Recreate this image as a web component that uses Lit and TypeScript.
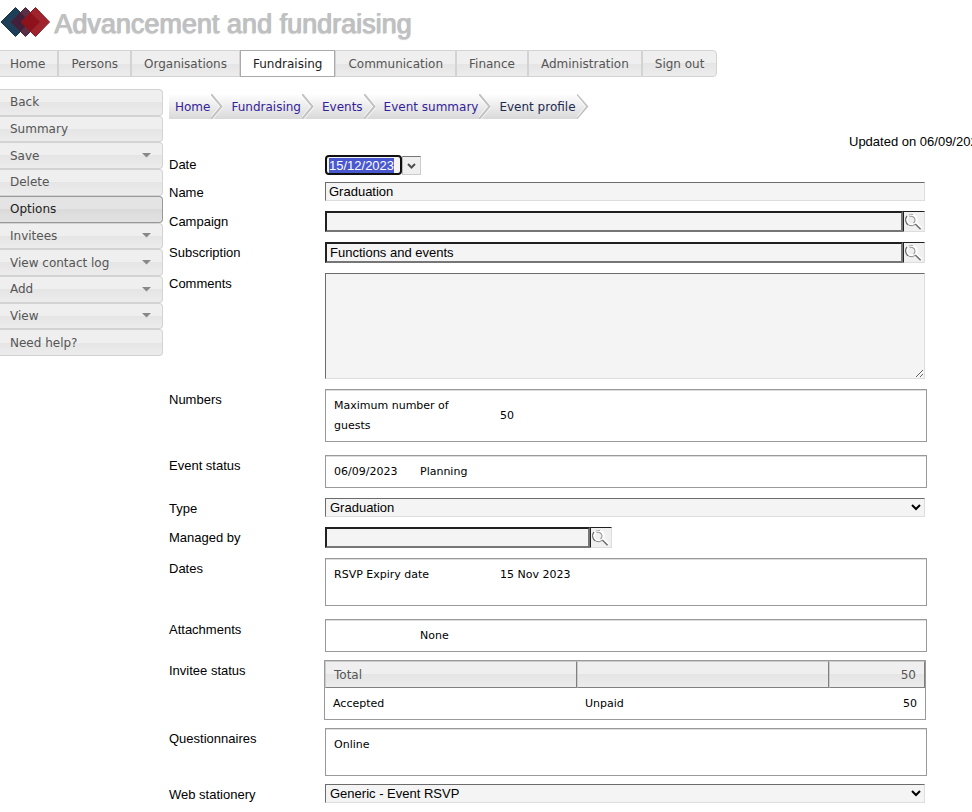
import { LitElement, html, css, svg } from "lit";
import { customElement, property } from "lit/decorators.js";
import { classMap } from "lit/directives/class-map.js";

const NAV = ["Home", "Persons", "Organisations", "Fundraising", "Communication", "Finance", "Administration", "Sign out"];
const CRUMBS = ["Home", "Fundraising", "Events", "Event summary", "Event profile"];
const ACTIONS: { label: string; more?: boolean; active?: boolean }[] = [
  { label: "Back" },
  { label: "Summary" },
  { label: "Save", more: true },
  { label: "Delete" },
  { label: "Options", active: true },
  { label: "Invitees", more: true },
  { label: "View contact log", more: true },
  { label: "Add", more: true },
  { label: "View", more: true },
  { label: "Need help?" },
];

@customElement("lookup-field")
export class LookupField extends LitElement {
  @property() value = "";
  @property() label = "";

  static styles = css`
    :host {
      display: flex;
      height: 21px;
    }
    .text {
      box-sizing: border-box;
      flex: 1;
      min-width: 0;
      margin: 0;
      padding: 0 3px;
      border: 2px solid;
      border-color: #202020 #767676 #767676 #202020;
      border-radius: 0;
      background: #f4f4f4;
      color: #000;
      font: 13px "Liberation Sans", Arial, sans-serif;
    }
    .find {
      box-sizing: border-box;
      width: 22px;
      margin: 0;
      padding: 0;
      border: 1px solid;
      border-color: #202020 #ddd #ddd #202020;
      background: #f0f0f0;
    }
    .find svg {
      display: block;
    }
  `;

  render() {
    return html`
      <input class="text" type="text" aria-label=${this.label} .value=${this.value} />
      <button class="find" type="button" aria-label="Find ${this.label}">
        <svg width="20" height="19" viewBox="0 0 20 19" fill="none">
          <circle cx="7.500" cy="8" r="5" stroke="#fff" stroke-width="2.400" />
          <path d="M4.500 13A6 6 0 0 1 3 4" stroke="#666" stroke-width="1.200" />
          <path d="M4.500 3.200A5.800 5.800 0 0 1 9 2.500" stroke="#aaa" />
          <path d="M5.500 4.600A4 4 0 0 1 11 7.500A4 4 0 0 1 9.500 11" stroke="#999" stroke-width="1.100" />
          <path d="M5 13.300A6 6 0 0 0 11 12.500" stroke="#888" />
          <path d="M12.500 11.300L17.500 16" stroke="#fff" stroke-width="2" />
          <path d="M11.300 12L16.600 17.300" stroke="#6c6c6c" stroke-width="1.500" />
        </svg>
      </button>
    `;
  }
}

@customElement("app-root")
export class AppRoot extends LitElement {
  static styles = css`
    :host {
      display: block;
      overflow: hidden;
      background: #fff;
      color: #000;
      font: 13px/16px "Liberation Sans", Arial, sans-serif;
    }
    .header {
      display: flex;
      align-items: center;
      gap: 4px;
      height: 50px;
    }
    .logo {
      display: block;
      width: 50px;
      height: 44px;
    }
    .title {
      margin: 0;
      padding-bottom: 2px;
      color: #c0c0c0;
      font-size: 27px;
      font-weight: 400;
      line-height: 48px;
      text-shadow: 1px 0 0 #c0c0c0, 0 1px 1px #ccc;
      white-space: nowrap;
    }
    .nav {
      display: flex;
      font: 12px/24px "DejaVu Sans", Verdana, sans-serif;
    }
    .tab {
      padding: 1px 12px 0;
      border: 1px solid #d3d3d3;
      background: linear-gradient(#efefef 0 50%, #e5e5e5 50%, #ececec);
      color: #555;
      text-decoration: none;
      white-space: nowrap;
    }
    .tab:first-child {
      padding-left: 10px;
      border-left: 0;
    }
    .tab:last-child {
      border-radius: 0 4px 4px 0;
    }
    .tab.active {
      border-color: #aaa;
      background: #fff;
      color: #212121;
    }
    .body {
      display: flex;
      align-items: flex-start;
      gap: 6px;
      padding-top: 12px;
    }
    .side {
      display: grid;
      grid-template-rows: repeat(10, 1fr);
      flex: none;
      width: 163px;
      height: 267px;
    }
    .action {
      display: flex;
      align-items: center;
      justify-content: space-between;
      min-height: 0;
      margin: 0;
      padding: 0 11px 0 10px;
      border: 1px solid #d3d3d3;
      border-left: 0;
      border-radius: 0 4px 4px 0;
      background: linear-gradient(#efefef 0 50%, #e5e5e5 50%, #ececec);
      color: #555;
      font: 12px/16px "DejaVu Sans", Verdana, sans-serif;
      text-align: left;
    }
    .action.active {
      border-color: #999;
      background: linear-gradient(#e4e4e4 0 50%, #dadada 50%, #e2e2e2);
      color: #212121;
    }
    .main {
      flex: 1;
      min-width: 0;
      padding-top: 5px;
    }
    .crumbs {
      display: flex;
      width: max-content;
      height: 25px;
      padding-left: 6px;
      background: linear-gradient(#fefefe, #d9d9d9);
      clip-path: polygon(0 0, calc(100% - 11px) 0, 100% 50%, calc(100% - 11px) 100%, 0 100%);
      font: 12px/26px "DejaVu Sans", Verdana, sans-serif;
    }
    .crumb {
      margin-right: 1px;
      color: #33229a;
      text-decoration: none;
      white-space: nowrap;
    }
    .crumb.here {
      color: #222a50;
    }
    .sep {
      flex: none;
      width: 12px;
      margin-right: 8px;
    }
    .sep:last-child {
      margin-right: 0;
    }
    .updated {
      width: 123px;
      margin: 15px 0 5px auto;
      overflow: hidden;
      white-space: nowrap;
    }
    .form {
      display: grid;
      gap: 10px;
      padding-right: 45px;
    }
    .row {
      display: grid;
      grid-template-columns: 156px minmax(0, 1fr);
      align-items: start;
    }
    .row.tight {
      margin-top: -2px;
    }
    .row.loose {
      margin-top: 3px;
    }
    .row.date {
      margin-bottom: -3px;
    }
    .label {
      padding-top: 3px;
    }
    .row.date .label {
      padding-top: 2px;
    }
    .date-field {
      display: flex;
      align-items: center;
      height: 20px;
    }
    .date-input {
      box-sizing: border-box;
      width: 77px;
      height: 20px;
      margin: 0;
      padding: 0 2px;
      border: 2px solid #101010;
      border-radius: 4px;
      outline: 0;
      background: #f4f4f4;
      font: 13px "Liberation Sans", Arial, sans-serif;
    }
    .date-input::selection {
      background: #4a58d0;
      color: #fff;
    }
    .pick {
      box-sizing: border-box;
      width: 19px;
      height: 19px;
      margin: 0;
      padding: 2px 0 0;
      border: 1px solid;
      border-color: #767676 #ccc #ccc #bbb;
      background: #efefef;
    }
    .pick svg {
      display: block;
      margin: 0 auto;
    }
    .control {
      box-sizing: border-box;
      display: block;
      width: calc(100% - 2px);
      height: 19px;
      margin: 0;
      padding: 0 3px;
      border: 1px solid;
      border-color: #6b6b6b #ddd #ddd #6b6b6b;
      border-radius: 0;
      background: #f4f4f4;
      color: #000;
      font: 13px "Liberation Sans", Arial, sans-serif;
    }
    .control.area {
      height: 106px;
    }
    .control.pick-list {
      padding: 0;
    }
    .lookup {
      margin-right: 2px;
    }
    .lookup.short {
      width: 287px;
    }
    .box {
      box-sizing: border-box;
      min-height: 33px;
      padding: 6px 8px 5px;
      border: 1px solid #999;
      box-shadow: inset 0 1px #ddd;
      font: 11px/20px "DejaVu Sans", Verdana, sans-serif;
    }
    .box.tall {
      min-height: 48px;
    }
    .facts {
      width: 100%;
      border-collapse: collapse;
      table-layout: fixed;
    }
    .facts td,
    .facts th {
      height: 20px;
      padding: 0;
      font-weight: 400;
      line-height: 20px;
      text-align: left;
    }
    .facts .wide {
      box-sizing: border-box;
      width: 166px;
      padding-right: 30px;
    }
    .facts .narrow {
      width: 86px;
    }
    .totals {
      width: 100%;
      margin-left: -1px;
      border: 1px solid #999;
      border-spacing: 0;
      table-layout: fixed;
      font: 11px/20px "DejaVu Sans", Verdana, sans-serif;
      text-align: left;
    }
    .totals th {
      box-sizing: border-box;
      width: 42%;
      height: 27px;
      padding: 0 8px;
      border: 1px solid;
      border-color: #ccc #808080 #808080 #ccc;
      background: linear-gradient(#efefef 0 50%, #e5e5e5 50%, #ececec);
      color: #555;
      font-size: 12px;
      font-weight: 400;
      line-height: 20px;
    }
    .totals td {
      height: 31px;
      padding: 0 8px;
    }
    .totals .count {
      width: 16%;
      text-align: right;
    }
  `;

  firstUpdated() {
    const date = this.renderRoot.querySelector<HTMLInputElement>("#date");
    date?.focus();
    date?.select();
  }

  private separator() {
    return html`<svg class="sep" width="12" height="25" viewBox="0 0 12 25" aria-hidden="true">
      <path d="M0 0L10.5 12.5L0 25" fill="none" stroke="#fff" stroke-opacity=".7" stroke-width="4" />
      <path d="M0 0L10.5 12.5L0 25" fill="none" stroke="#c2c2c2" stroke-width="2" />
    </svg>`;
  }

  private row(label: string, content: unknown, kind = "", id = "") {
    return html`<div class="row ${kind}">
      ${id ? html`<label class="label" for=${id}>${label}</label>` : html`<div class="label">${label}</div>`}
      ${content}
    </div>`;
  }

  private select(id: string, value: string) {
    return html`<select class="control pick-list" id=${id}><option>${value}</option></select>`;
  }

  render() {
    return html`
      <header class="header">
        <svg class="logo" viewBox="0 0 50 44" aria-hidden="true">
          ${svg`
            <path d="M15.5 4.500L30 19L15.500 33.500L1 19Z" fill="#1d4058" stroke="#173448" />
            <path d="M25.500 4.500L40 19L25.500 33.500L11 19Z" fill="#5b3044" stroke="#4a2438" />
            <path d="M20.500 9.500L30 19L20.500 28.500L11 19Z" fill="#43203a" />
            <path d="M35.500 4.500L49.500 19L35.500 33.500L21 19Z" fill="#a0242e" stroke="#8c1720" />
            <path d="M30.500 9.500L40 19L30.500 28.500L21 19Z" fill="#8d121b" />
          `}
        </svg>
        <h1 class="title">Advancement and fundraising</h1>
      </header>
      <nav class="nav">
        ${NAV.map((t) => html`<a href="#" class=${classMap({ tab: true, active: t === "Fundraising" })}>${t}</a>`)}
      </nav>
      <div class="body">
        <nav class="side">
          ${ACTIONS.map(
            (a) => html`<button type="button" class=${classMap({ action: true, active: !!a.active })}>
              ${a.label}
              ${a.more ? html`<svg width="9" height="5" viewBox="0 0 9 5"><path d="M0 0H9L4.500 4.500Z" fill="#888" /></svg>` : ""}
            </button>`
          )}
        </nav>
        <main class="main">
          <nav class="crumbs">
            ${CRUMBS.map(
              (c, i) => html`<a href="#" class=${classMap({ crumb: true, here: i === CRUMBS.length - 1 })}>${c}</a>${this.separator()}`
            )}
          </nav>
          <p class="updated">Updated on 06/09/2023</p>
          <form class="form">
            ${this.row(
              "Date",
              html`<div class="date-field">
                <input class="date-input" id="date" type="text" value="15/12/2023" />
                <button class="pick" type="button" aria-label="Choose date">
                  <svg width="9" height="8" viewBox="0 0 9 8"><path d="M1 2L4.500 5.500L8 2" fill="none" stroke="#505050" stroke-width="2" /></svg>
                </button>
              </div>`,
              "date",
              "date"
            )}
            ${this.row("Name", html`<input class="control" id="name" type="text" value="Graduation" />`, "", "name")}
            ${this.row("Campaign", html`<lookup-field class="lookup" label="Campaign"></lookup-field>`)}
            ${this.row("Subscription", html`<lookup-field class="lookup" label="Subscription" value="Functions and events"></lookup-field>`)}
            ${this.row("Comments", html`<textarea class="control area" id="comments"></textarea>`, "", "comments")}
            ${this.row(
              "Numbers",
              html`<div class="box"><table class="facts"><tr><th class="wide">Maximum number of guests</th><td>50</td></tr></table></div>`
            )}
            ${this.row(
              "Event status",
              html`<div class="box"><table class="facts"><tr><td class="narrow">06/09/2023</td><td>Planning</td></tr></table></div>`,
              "loose"
            )}
            ${this.row("Type", this.select("type", "Graduation"), "", "type")}
            ${this.row("Managed by", html`<lookup-field class="lookup short" label="Managed by"></lookup-field>`)}
            ${this.row(
              "Dates",
              html`<div class="box tall"><table class="facts"><tr><th class="wide">RSVP Expiry date</th><td>15 Nov 2023</td></tr></table></div>`
            )}
            ${this.row(
              "Attachments",
              html`<div class="box"><table class="facts"><tr><td class="narrow"></td><td>None</td></tr></table></div>`,
              "loose"
            )}
            ${this.row(
              "Invitee status",
              html`<table class="totals">
                <thead><tr><th>Total</th><th></th><th class="count">50</th></tr></thead>
                <tbody><tr><td>Accepted</td><td>Unpaid</td><td class="count">50</td></tr></tbody>
              </table>`,
              "tight"
            )}
            ${this.row("Questionnaires", html`<div class="box tall">Online</div>`, "tight")}
            ${this.row("Web stationery", this.select("stationery", "Generic - Event RSVP"), "tight", "stationery")}
          </form>
        </main>
      </div>
    `;
  }
}
